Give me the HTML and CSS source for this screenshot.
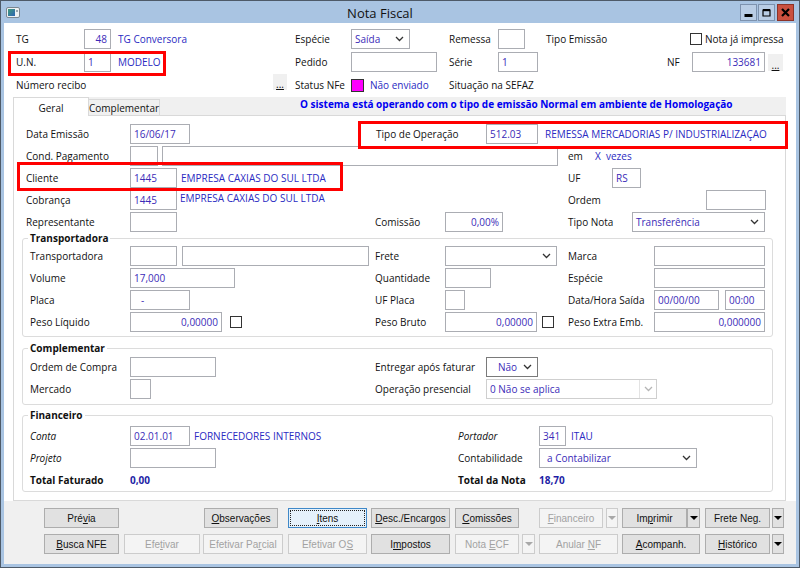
FILE: index.html
```html
<!DOCTYPE html>
<html lang="pt-BR">
<head>
<meta charset="utf-8">
<title>Nota Fiscal</title>
<link rel="stylesheet" href="styles.css">
</head>
<body>
<div class="window">
  <div class="titlebar">
    <svg class="app-icon" width="14" height="11" viewBox="0 0 14 11">
      <defs><linearGradient id="gi" x1="0" y1="0" x2="1" y2="1"><stop offset="0" stop-color="#3e9b7a"/><stop offset="1" stop-color="#2f63b5"/></linearGradient></defs>
      <rect x="0.5" y="0.5" width="13" height="10" rx="1.5" fill="#eef1f3" stroke="#7b8691"/>
      <rect x="2" y="2" width="7" height="7" fill="url(#gi)"/>
      <rect x="10" y="3" width="2" height="2" fill="#9aa6b1"/>
    </svg>
    <div class="title">Nota Fiscal</div>
    <div class="controls">
      <span class="ctl"><svg width="15" height="15" viewBox="0 0 15 15"><rect x="3.5" y="9" width="8" height="3" fill="#000"/></svg></span>
      <span class="ctl ml1"><svg width="15" height="15" viewBox="0 0 15 15"><path d="M4 5h7v6H4z" fill="none" stroke="#000" stroke-width="1.2"/><rect x="4" y="4" width="7" height="2.2" fill="#000"/></svg></span>
      <span class="ctl close ml2"><svg width="15" height="15" viewBox="0 0 15 15"><path d="M4 4l7 7M11 4l-7 7" stroke="#000" stroke-width="2.2"/></svg></span>
    </div>
  </div>
  <div class="client">
    <div class="header">
      <div class="hrow hr1">
        <span class="lbl w68">TG</span>
        <span class="in num w27">48</span>
        <span class="blue ml7 w177">TG Conversora</span>
        <span class="lbl w56">Espécie</span>
        <span class="in sel w59">Saída<svg class="chev" width="9" height="6" viewBox="0 0 9 6"><path d="M1 1l3.5 3.5L8 1" fill="none" stroke="#333" stroke-width="1.3"/></svg></span>
        <span class="lbl ml39 w49">Remessa</span>
        <span class="in w27"></span>
        <span class="lbl ml21 w144">Tipo Emissão</span>
        <span class="chk"></span>
        <span class="lbl ml3">Nota já impressa</span>
      </div>
      <div class="hrow hr2">
        <span class="lbl w68">U.N.</span>
        <span class="in w27">1</span>
        <span class="blue ml7 w177">MODELO</span>
        <span class="lbl w56">Pedido</span>
        <span class="in w86"></span>
        <span class="lbl ml12 w49">Série</span>
        <span class="in w40">1</span>
        <span class="lbl ml129 w25">NF</span>
        <span class="in num w73">133681</span>
        <span class="dots ml3 w15">...</span>
      </div>
      <div class="hrow hr3">
        <span class="lbl w257">Número recibo</span>
        <span class="dots top w14">...</span>
        <span class="lbl ml8 w56">Status NFe</span>
        <span class="status"></span>
        <span class="blue ml6 w79">Não enviado</span>
        <span class="lbl">Situação na SEFAZ</span>
      </div>
    </div>

    <div class="tabs">
      <span class="tab active">Geral</span>
      <span class="tab">Complementar</span>
      <span class="msg">O sistema está operando com o tipo de emissão Normal em ambiente de Homologação</span>
    </div>

    <div class="panel">
      <div class="prow">
        <span class="lbl w104">Data Emissão</span>
        <span class="in w60">16/06/17</span>
        <span class="lbl ml186 w110">Tipo de Operação</span>
        <span class="in w52">512.03</span>
        <span class="blue ml7">REMESSA MERCADORIAS P/ INDUSTRIALIZAÇAO</span>
      </div>
      <div class="prow">
        <span class="lbl w104">Cond. Pagamento</span>
        <span class="in w28"></span>
        <span class="in ml4 w396"></span>
        <span class="lbl ml10 w27">em</span>
        <span class="blue">X&nbsp; vezes</span>
      </div>
      <div class="prow">
        <span class="lbl w104">Cliente</span>
        <span class="in w47">1445</span>
        <span class="blue ml4 w387">EMPRESA CAXIAS DO SUL LTDA</span>
        <span class="lbl w44">UF</span>
        <span class="in w29">RS</span>
      </div>
      <div class="prow">
        <span class="lbl w104">Cobrança</span>
        <span class="in w47">1445</span>
        <span class="blue raised ml3 w388">EMPRESA CAXIAS DO SUL LTDA</span>
        <span class="lbl w138">Ordem</span>
        <span class="in w60"></span>
      </div>
      <div class="prow">
        <span class="lbl w104">Representante</span>
        <span class="in w47"></span>
        <span class="lbl ml198 w70">Comissão</span>
        <span class="in num w58">0,00%</span>
        <span class="lbl ml65 w64">Tipo Nota</span>
        <span class="in sel w133">Transferência<svg class="chev" width="9" height="6" viewBox="0 0 9 6"><path d="M1 1l3.5 3.5L8 1" fill="none" stroke="#333" stroke-width="1.3"/></svg></span>
      </div>

      <fieldset class="group g1">
        <legend>Transportadora</legend>
        <div class="grow">
          <span class="lbl w100">Transportadora</span>
          <span class="in w47"></span>
          <span class="in ml5 w187"></span>
          <span class="lbl ml6 w70">Frete</span>
          <span class="in sel w112"><svg class="chev" width="9" height="6" viewBox="0 0 9 6"><path d="M1 1l3.5 3.5L8 1" fill="none" stroke="#333" stroke-width="1.3"/></svg></span>
          <span class="lbl ml11 w86">Marca</span>
          <span class="in w111"></span>
        </div>
        <div class="grow">
          <span class="lbl w100">Volume</span>
          <span class="in w105">17,000</span>
          <span class="lbl ml140 w70">Quantidade</span>
          <span class="in w46"></span>
          <span class="lbl ml77 w86">Espécie</span>
          <span class="in w111"></span>
        </div>
        <div class="grow">
          <span class="lbl w100">Placa</span>
          <span class="in pad w60">-</span>
          <span class="lbl ml185 w70">UF Placa</span>
          <span class="in w20"></span>
          <span class="lbl ml103 w86">Data/Hora Saída</span>
          <span class="in w65">00/00/00</span>
          <span class="in ml6 w40">00:00</span>
        </div>
        <div class="grow">
          <span class="lbl w100">Peso Líquido</span>
          <span class="in num w92">0,00000</span>
          <span class="chk ml8"></span>
          <span class="lbl ml133 w70">Peso Bruto</span>
          <span class="in num w92">0,00000</span>
          <span class="chk ml5"></span>
          <span class="lbl ml14 w86">Peso Extra Emb.</span>
          <span class="in num w111">0,000000</span>
        </div>
      </fieldset>

      <fieldset class="group g2">
        <legend>Complementar</legend>
        <div class="grow">
          <span class="lbl w100">Ordem de Compra</span>
          <span class="in w86"></span>
          <span class="lbl ml159 w111">Entregar após faturar</span>
          <span class="in sel focus w52"><span class="ml8">Não</span><svg class="chev" width="9" height="6" viewBox="0 0 9 6"><path d="M1 1l3.5 3.5L8 1" fill="none" stroke="#333" stroke-width="1.3"/></svg></span>
        </div>
        <div class="grow">
          <span class="lbl w100">Mercado</span>
          <span class="in w21"></span>
          <span class="lbl ml224 w111">Operação presencial</span>
          <span class="in sel dis w171">0 Não se aplica<span class="sep"><svg width="9" height="6" viewBox="0 0 9 6"><path d="M1 1l3.5 3.5L8 1" fill="none" stroke="#b5b5b5" stroke-width="1.3"/></svg></span></span>
        </div>
      </fieldset>

      <fieldset class="group g3">
        <legend>Financeiro</legend>
        <div class="grow">
          <span class="lbl it w100">Conta</span>
          <span class="in w60">02.01.01</span>
          <span class="blue ml4 w264">FORNECEDORES INTERNOS</span>
          <span class="lbl it w81">Portador</span>
          <span class="in w27">341</span>
          <span class="blue ml5">ITAU</span>
        </div>
        <div class="grow">
          <span class="lbl it w100">Projeto</span>
          <span class="in w86"></span>
          <span class="lbl ml242 w81">Contabilidade</span>
          <span class="in sel w158"><span class="ml4">a Contabilizar</span><svg class="chev" width="9" height="6" viewBox="0 0 9 6"><path d="M1 1l3.5 3.5L8 1" fill="none" stroke="#333" stroke-width="1.3"/></svg></span>
        </div>
        <div class="grow">
          <span class="lbl b w100">Total Faturado</span>
          <span class="total w328">0,00</span>
          <span class="lbl b w81">Total da Nota</span>
          <span class="total">18,70</span>
        </div>
      </fieldset>
    </div>

    <div class="btnbar">
      <div class="brow">
        <span class="btn w75"><span>Pré<u>v</u>ia</span></span>
        <span class="btn ml85 w74"><span><u>O</u>bservações</span></span>
        <span class="btn focused ml10 w79"><span><u>I</u>tens</span></span>
        <span class="btn ml4 w79"><span><u>D</u>esc./Encargos</span></span>
        <span class="btn ml5 w64"><span><u>C</u>omissões</span></span>
        <span class="btn off ml20 w64"><span><u>F</u>inanceiro</span></span>
        <span class="btn arr off ml3 w12"><i class="tri"></i></span>
        <span class="btn ml4 w65"><span>Im<u>p</u>rimir</span></span>
        <span class="btn arr w13"><i class="tri"></i></span>
        <span class="btn ml5 w65"><span>Frete Neg.</span></span>
        <span class="btn arr ml2 w12"><i class="tri"></i></span>
      </div>
      <div class="brow">
        <span class="btn w75"><span><u>B</u>usca NFE</span></span>
        <span class="btn off ml5 w76"><span>Efe<u>t</u>ivar</span></span>
        <span class="btn off ml3 w80"><span>Efetivar Pa<u>r</u>cial</span></span>
        <span class="btn off ml5 w79"><span>Efetivar O<u>S</u></span></span>
        <span class="btn ml4 w79"><span>I<u>m</u>postos</span></span>
        <span class="btn off ml5 w64"><span>Nota <u>E</u>CF</span></span>
        <span class="btn arr off ml3 w13"><i class="tri"></i></span>
        <span class="btn off ml4 w79"><span>Anular <u>N</u>F</span></span>
        <span class="btn ml4 w78"><span><u>A</u>companh.</span></span>
        <span class="btn ml5 w65"><span><u>H</u>istórico</span></span>
        <span class="btn arr ml2 w12"><i class="tri"></i></span>
      </div>
    </div>

    <div class="mark mark-un"></div>
    <div class="mark mark-op"></div>
    <div class="mark mark-cli"></div>
  </div>
</div>
</body>
</html>
```

FILE: styles.css
```css
* { box-sizing: border-box; }
html, body { margin: 0; padding: 0; }
body {
  width: 800px; height: 568px; overflow: hidden;
  font-family: "Open Sans", "Liberation Sans", sans-serif;
  font-size: 10px; color: #111; background: #fff;
}
.window {
  width: 800px; height: 568px;
  border: 1px solid #4e5a68;
  background: #a9c4e2;
  display: flex; flex-direction: column;
}
.titlebar {
  height: 22px; flex: none;
  display: flex; align-items: flex-start;
  padding: 0 5px;
}
.app-icon { margin-top: 6px; flex: none; }
.title {
  flex: 1; text-align: center;
  font-size: 13px; line-height: 24px; color: #111;
}
.controls { display: flex; margin-top: 3px; flex: none; }
.ctl {
  width: 17px; height: 17px;
  border: 1px solid #7d92ae; background: #b9cde5;
  display: flex; align-items: center; justify-content: center;
}
.ctl.close { background: #c9503f; border-color: #8d3328; }

.client {
  position: relative;
  margin: 0 3px 3px 3px; flex: 1;
  background: #fff;
  display: flex; flex-direction: column;
}

/* header */
.header { height: 74px; flex: none; padding: 5px 0 1px 12px; }
.hrow { display: flex; align-items: center; }
.hr1 { height: 21px; }
.hr2 { height: 20px; margin-top: 3px; }
.hr3 { height: 22px; margin-top: 2px; }

.lbl { flex: none; white-space: nowrap; }
.lbl.it { font-style: italic; }
.lbl.b { font-weight: 700; }
.blue { flex: none; white-space: nowrap; color: #2a2ac2; }
.blue.raised { margin-top: -4px; }

.in {
  flex: none; height: 20px;
  border: 1px solid #abadb3; background: #fff;
  color: #3b2bb8; padding: 0 3px;
  display: flex; align-items: center;
  white-space: nowrap; overflow: hidden;
}
.in.num { justify-content: flex-end; }
.in.pad { padding-left: 10px; }
.sel .chev { margin-left: auto; margin-right: 2px; flex: none; }
.sel.focus { border-color: #7a7a7a; }
.sel.dis { border-color: #cfcfcf; padding-right: 0; }
.sel .sep {
  margin-left: auto; height: 100%; width: 17px;
  border-left: 1px solid #e3e3e3;
  display: flex; align-items: center; justify-content: center;
}
.chk {
  flex: none; width: 12px; height: 12px;
  border: 1px solid #333; background: #fff;
}
.status {
  flex: none; width: 13px; height: 13px;
  border: 1px solid #333; background: #ff00ff;
}
.dots {
  flex: none; height: 17px; background: #f0f0f0;
  display: flex; align-items: flex-end; justify-content: center;
  text-decoration: underline; line-height: 12px; font-size: 10px;
}
.dots.top { align-self: flex-start; height: 16px; }

/* tabs */
.tabs {
  position: relative; z-index: 2;
  margin-left: 9px; width: 773px; height: 18px; flex: none;
  background: #f0f0f0;
  display: flex; align-items: flex-start;
}
.tab {
  flex: none; width: 71px; height: 16px; margin-top: 2px;
  border: 1px solid #d9d9d9; border-bottom: 0; border-left: 0;
  background: #f0f0f0;
  display: flex; align-items: center; justify-content: center;
}
.tab.active {
  width: 76px; height: 19px; margin-top: 0;
  background: #fff; border-left: 1px solid #d9d9d9;
  padding-top: 1px;
}
.msg {
  margin-left: 140px; font-weight: 700; color: #0000f0;
  line-height: 15px; white-space: nowrap;
}

/* panel */
.panel {
  margin-left: 9px; width: 773px; height: 386px; flex: none;
  border: 1px solid #d9d9d9; background: #fff;
  padding-top: 7px;
}
.prow { display: flex; align-items: center; height: 22px; padding-left: 12px; }
.group {
  margin: 0 0 0 8px; width: 751px; min-width: 0;
  border: 1px solid #dcdcdc; border-radius: 3px;
  padding: 2px 0 3px 7px;
}
.group legend {
  font-weight: 700; line-height: 10px; padding: 0 2px; margin-left: -2px;
  color: #111;
}
.g2 { margin-top: 6px; padding-top: 3px; padding-bottom: 4px; }
.g3 { margin-top: 5px; padding-top: 5px; padding-bottom: 0; }
.grow { display: flex; align-items: center; height: 22px; }
.total { flex: none; font-weight: 700; color: #1e1ea6; }

/* buttons */
.btnbar { flex: 1; background: #f0f0f0; padding: 7px 0 0 40px; }
.brow { display: flex; height: 20px; }
.brow + .brow { margin-top: 6px; }
.btn {
  flex: none; height: 20px;
  border: 1px solid #adadad; background: #e1e1e1;
  font-family: "Liberation Sans", Arial, sans-serif; font-size: 10px; color: #111;
  display: flex; align-items: center; justify-content: center;
  white-space: nowrap;
}
.btn.off { background: #f4f4f4; border-color: #cccccc; color: #a2a2a2; }
.btn.focused {
  background: #e5f1fb; border-color: #3f88c8;
  outline: 1px dotted #222; outline-offset: -3px;
}
.tri {
  display: block; width: 0; height: 0;
  border-left: 4px solid transparent; border-right: 4px solid transparent;
  border-top: 4px solid #000;
}
.btn.off .tri { border-top-color: #a8a8a8; }

/* annotation marks */
.mark { position: absolute; border: 3px solid #ff0000; pointer-events: none; }
.mark-un { left: 4px; top: 28px; width: 158px; height: 25px; }
.mark-op { left: 354px; top: 98px; width: 430px; height: 28px; }
.mark-cli { left: 13px; top: 139px; width: 326px; height: 29px; }

/* widths */
.w12{width:12px}.w13{width:13px}.w14{width:14px}.w15{width:15px}.w20{width:20px}.w21{width:21px}
.w25{width:25px}.w27{width:27px}.w28{width:28px}.w29{width:29px}.w40{width:40px}.w44{width:44px}
.w46{width:46px}.w47{width:47px}.w49{width:49px}.w52{width:52px}.w56{width:56px}.w58{width:58px}
.w59{width:59px}.w60{width:60px}.w64{width:64px}.w65{width:65px}.w68{width:68px}.w70{width:70px}
.w73{width:73px}.w74{width:74px}.w75{width:75px}.w76{width:76px}.w78{width:78px}.w79{width:79px}
.w80{width:80px}.w81{width:81px}.w86{width:86px}.w92{width:92px}.w100{width:100px}.w104{width:104px}
.w105{width:105px}.w110{width:110px}.w111{width:111px}.w112{width:112px}.w133{width:133px}
.w138{width:138px}.w144{width:144px}.w158{width:158px}.w171{width:171px}.w177{width:177px}
.w187{width:187px}.w257{width:257px}.w264{width:264px}.w328{width:328px}.w387{width:387px}
.w388{width:388px}.w396{width:396px}
/* left margins */
.ml1{margin-left:1px}.ml2{margin-left:2px}.ml3{margin-left:3px}.ml4{margin-left:4px}.ml5{margin-left:5px}
.ml6{margin-left:6px}.ml7{margin-left:7px}.ml8{margin-left:8px}.ml10{margin-left:10px}.ml11{margin-left:11px}
.ml12{margin-left:12px}.ml14{margin-left:14px}.ml20{margin-left:20px}.ml21{margin-left:21px}
.ml39{margin-left:39px}.ml65{margin-left:65px}.ml77{margin-left:77px}.ml85{margin-left:85px}
.ml103{margin-left:103px}.ml129{margin-left:129px}.ml133{margin-left:133px}.ml140{margin-left:140px}
.ml159{margin-left:159px}.ml185{margin-left:185px}.ml186{margin-left:186px}.ml198{margin-left:198px}
.ml224{margin-left:224px}.ml242{margin-left:242px}
```
